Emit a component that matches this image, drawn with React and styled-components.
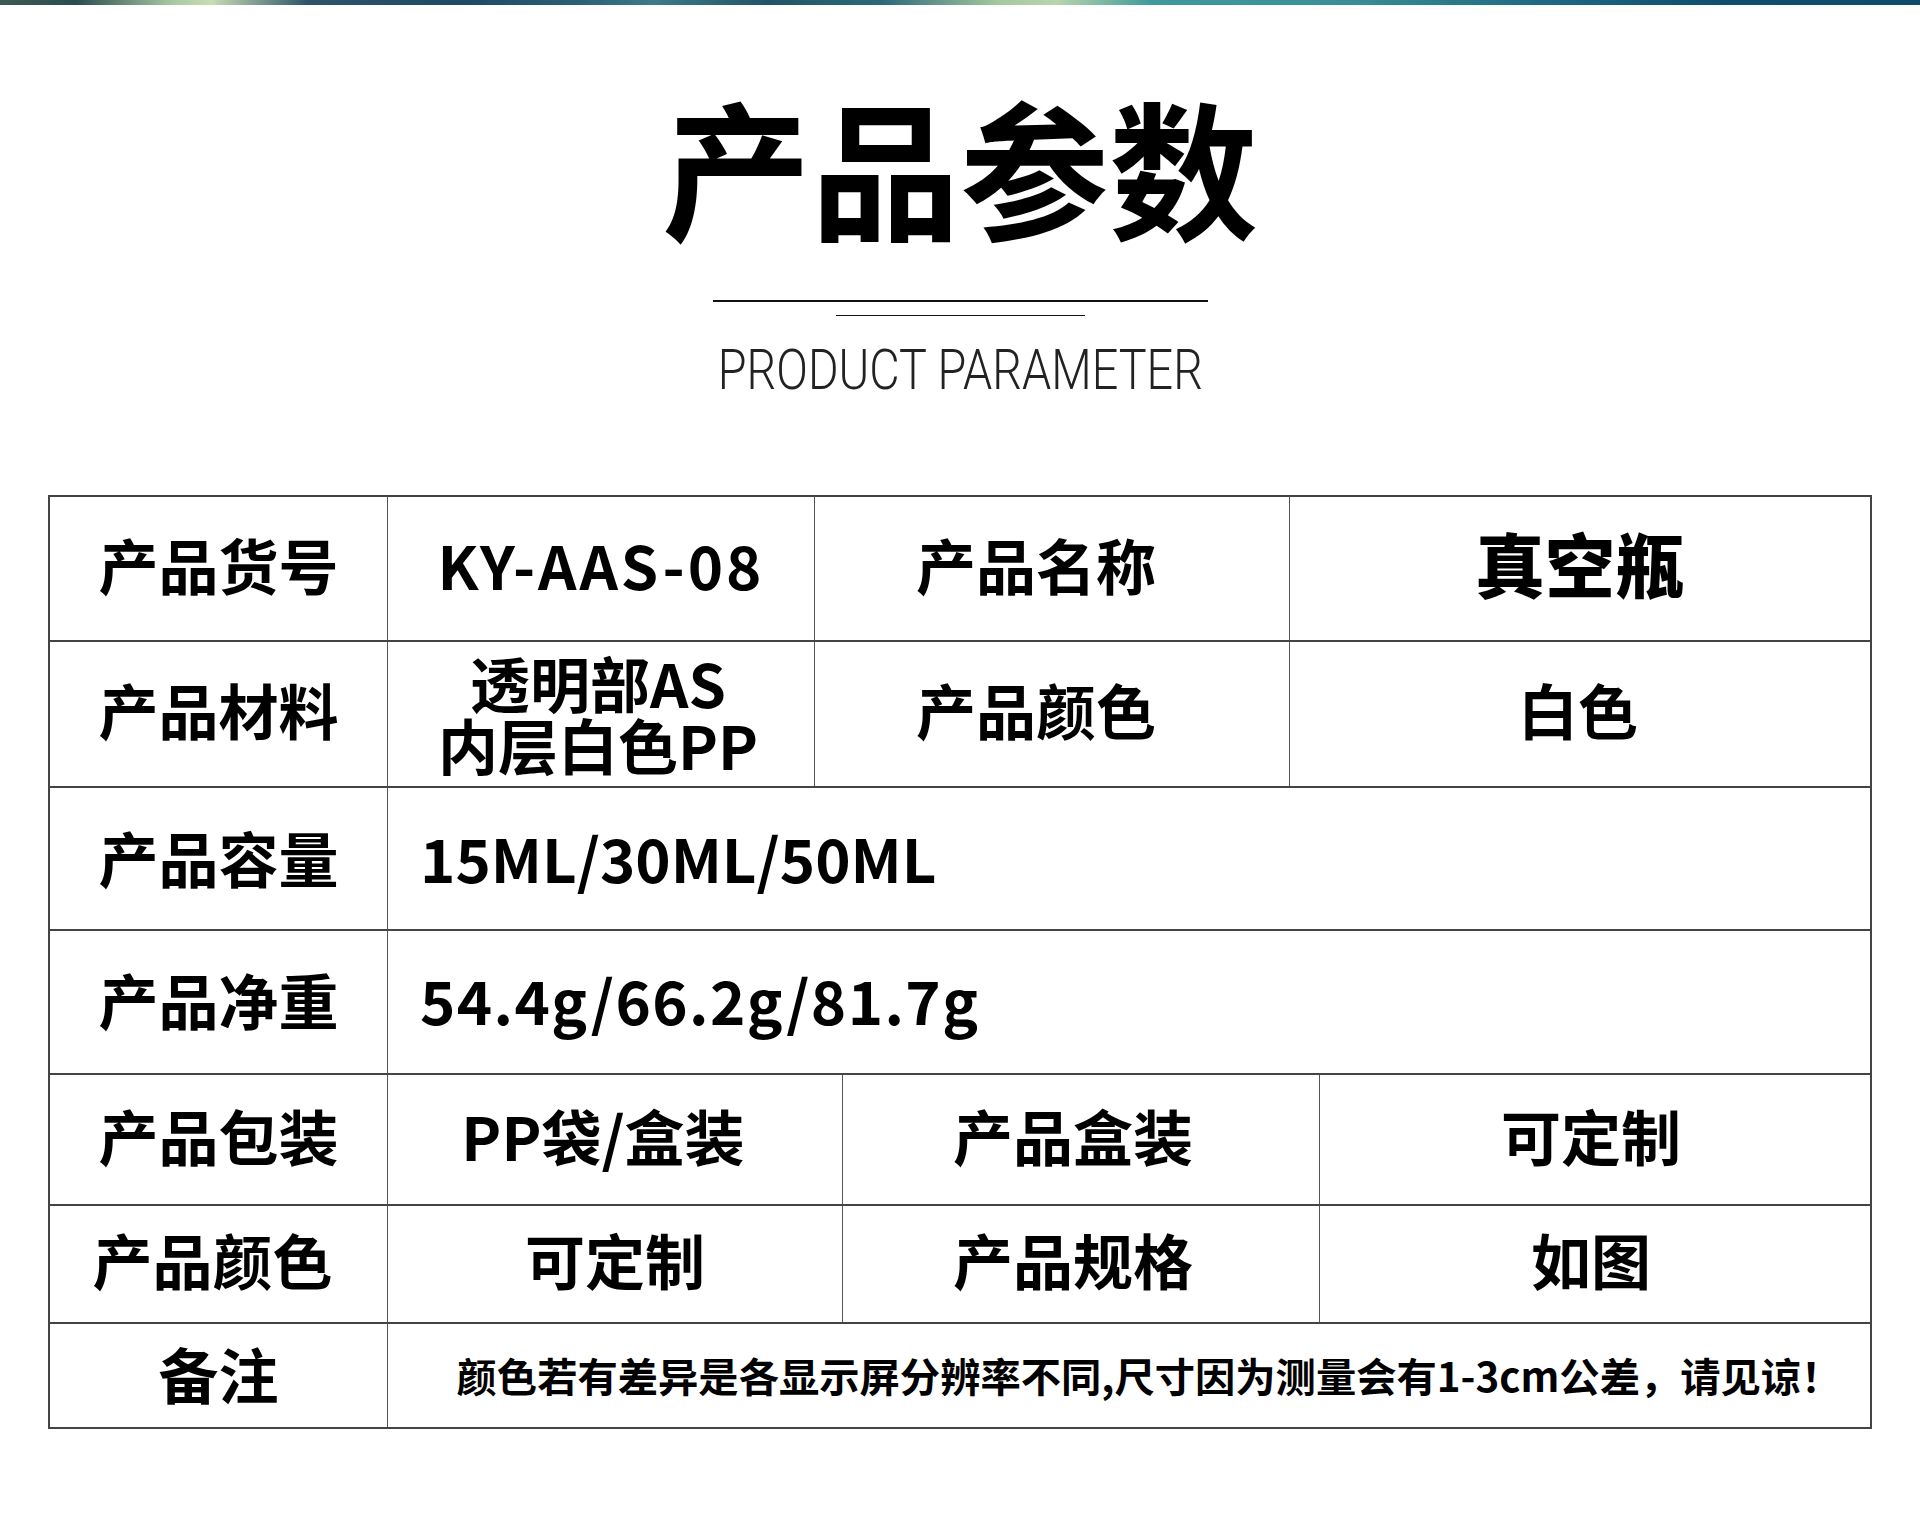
import React from "react"
import styled, { createGlobalStyle } from "styled-components"

const GlobalStyle = createGlobalStyle`
  html, body {
    margin: 0;
    padding: 0;
    background: #ffffff;
  }
  body {
    font-family: "Noto Sans CJK SC", "Noto Sans", sans-serif;
    color: #000;
  }
  * { box-sizing: border-box; }
`

const Page = styled.div`
  width: 1920px;
  min-height: 1526px;
  background: #ffffff;
`

const TopBar = styled.div`
  height: 5px;
  background: linear-gradient(90deg,
    #3d5a52 0%, #2c4d4f 4%, #a9c9a3 9%, #c9dcb4 11%, #2e5468 16%,
    #1e4866 24%, #2a5f75 30%, #3d7b86 34%, #215468 40%, #2c6a78 46%,
    #a6c89e 52%, #b9d5ae 55%, #3e9a9a 60%, #3a8f96 70%, #1f6a82 80%,
    #0f4d6e 90%, #0f4a6a 100%);
`

const Header = styled.div`
  display: flex;
  flex-direction: column;
  align-items: center;
  padding-top: 84px;
`

const Title = styled.h1`
  margin: 0;
  font-size: 149px;
  line-height: 150px;
  font-weight: 700;
  color: #000;
`

const Rule = styled.div`
  width: ${p => p.$w}px;
  height: ${p => p.$t}px;
  background: #111;
  margin-top: ${p => p.$top}px;
`

const Subtitle = styled.div`
  margin-top: 27px;
  font-family: "Roboto", "Lato", sans-serif;
  font-weight: 300;
  font-size: 55px;
  line-height: 55px;
  color: #222;
  transform: scaleX(0.85);
  white-space: nowrap;
`

const Table = styled.div`
  margin: 97px 48px 0;
  border: 2px solid #444;
`

const Row = styled.div`
  display: grid;
  grid-template-columns: ${p => p.$cols};
  height: ${p => p.$h}px;
  & + & {
    border-top: 2px solid #444;
  }
`

const Cell = styled.div`
  display: flex;
  align-items: center;
  justify-content: ${p => (p.$left ? "flex-start" : "center")};
  padding-left: ${p => (p.$left ? 32 : 0)}px;
  padding-right: ${p => p.$dx || 0}px;
  padding-bottom: ${p => (p.$pb === undefined ? 10 : p.$pb)}px;
  font-size: ${p => p.$size || 60}px;
  font-weight: ${p => p.$weight || 700};
  letter-spacing: ${p => p.$ls || 0}px;
  line-height: 1.03;
  text-align: center;
  color: #000;
  white-space: nowrap;
  & + & {
    border-left: 1.5px solid #555;
  }
`

const Note = styled.span`
  font-size: 40.3px;
  font-weight: 700;
  margin-left: 40px;
`

const FOUR = "337px 427px 475px 1fr"
const FOUR_B = "337px 455px 477px 1fr"
const TWO = "337px 1fr"

export default function App() {
  return (
    <Page>
      <GlobalStyle />
      <TopBar />
      <Header>
        <Title>产品参数</Title>
        <Rule $w={495} $t={2} $top={61} />
        <Rule $w={249} $t={1} $top={13} />
        <Subtitle>PRODUCT PARAMETER</Subtitle>
      </Header>
      <Table>
        <Row $cols={FOUR} $h={143}>
          <Cell>产品货号</Cell>
          <Cell $ls={3}>KY-AAS-08</Cell>
          <Cell $dx={32}>产品名称</Cell>
          <Cell $size={70} $weight={900}>真空瓶</Cell>
        </Row>
        <Row $cols={FOUR} $h={146}>
          <Cell>产品材料</Cell>
          <Cell $dx={6} $pb={3}>透明部AS<br />内层白色PP</Cell>
          <Cell $dx={32}>产品颜色</Cell>
          <Cell $dx={4}>白色</Cell>
        </Row>
        <Row $cols={TWO} $h={143}>
          <Cell $pb={4}>产品容量</Cell>
          <Cell $left $pb={4}>15ML/30ML/50ML</Cell>
        </Row>
        <Row $cols={TWO} $h={144}>
          <Cell $pb={6}>产品净重</Cell>
          <Cell $left $pb={6} $ls={1.4}>54.4g/66.2g/81.7g</Cell>
        </Row>
        <Row $cols={FOUR_B} $h={131}>
          <Cell>产品包装</Cell>
          <Cell $dx={24}>PP袋/盒装</Cell>
          <Cell $dx={16}>产品盒装</Cell>
          <Cell $dx={8}>可定制</Cell>
        </Row>
        <Row $cols={FOUR_B} $h={118}>
          <Cell $dx={12}>产品颜色</Cell>
          <Cell>可定制</Cell>
          <Cell $dx={16}>产品规格</Cell>
          <Cell $dx={8}>如图</Cell>
        </Row>
        <Row $cols={TWO} $h={105}>
          <Cell $pb={6}>备注</Cell>
          <Cell $pb={2}>
            <Note>颜色若有差异是各显示屏分辨率不同,尺寸因为测量会有1-3cm公差，请见谅！</Note>
          </Cell>
        </Row>
      </Table>
    </Page>
  )
}
